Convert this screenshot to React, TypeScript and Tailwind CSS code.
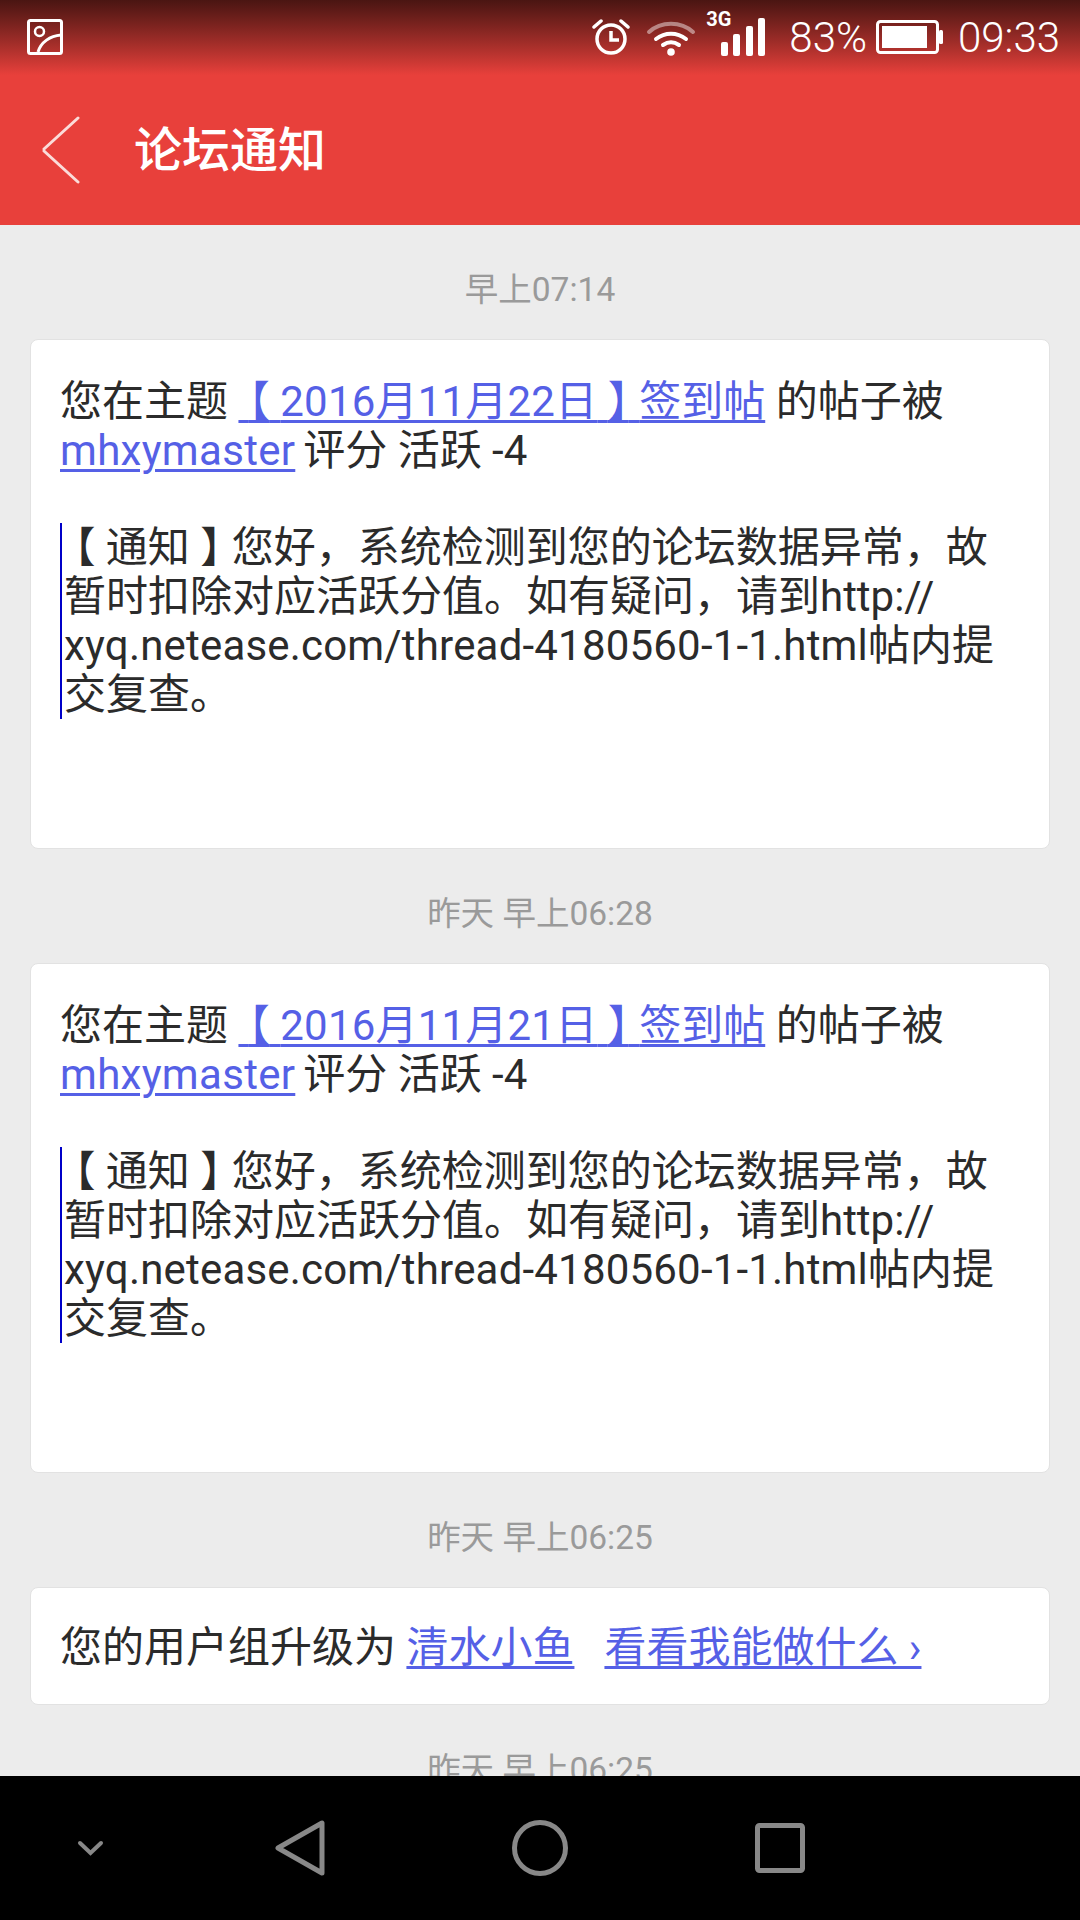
const fontStack = "font-['Roboto','Noto_Sans_CJK_SC',sans-serif]";

function Timestamp({ children }: { children: string }) {
  return (
    <div className="flex h-[114px] shrink-0 items-center justify-center pt-[15px] text-[33.5px] leading-[40px] text-[#9a9a9a]">
      {children}
    </div>
  );
}

function A({ children }: { children: React.ReactNode }) {
  return <span className="text-[#5560e6] underline decoration-[3px] underline-offset-[4px]">{children}</span>;
}

// the brackets sit centred in a full em in the reference, half-width glyph plus a space each side
function Bracket({ children }: { children: string }) {
  return (
    <>
      {'\u00a0'}
      <span className="[font-feature-settings:'halt']">{children}</span>
      {'\u00a0'}
    </>
  );
}

function NoticeCard({ date }: { date: string }) {
  return (
    <div className="mx-[30px] h-[510px] shrink-0 rounded-[8px] border border-[#e2e2e2] bg-white pt-[37px] pl-[29px] text-[42px] leading-[49px] whitespace-nowrap text-[#2b2b2b]">
      <div>
        您在主题{' '}
        <A>
          <Bracket>【</Bracket>
          <span className="tracking-[0.2px]">{date}</span>
          <Bracket>】</Bracket>签到帖
        </A>{' '}
        的帖子被
        <br />
        <span className="tracking-[0.3px]">
          <A>mhxymaster</A>
        </span>
        <span className="ml-[8px]">评分 活跃 -4</span>
      </div>
      <div className="mt-[48px] border-l-2 border-[#0000c8] pl-[2px]">
        <Bracket>【</Bracket>通知<Bracket>】</Bracket>您好，系统检测到您的论坛数据异常，故
        <br />
        暂时扣除对应活跃分值。如有疑问，请到http://
        <br />
        <span className="tracking-[0.19px]">xyq.netease.com/thread-4180560-1-1.html</span>帖内提
        <br />
        交复查。
      </div>
    </div>
  );
}

function StatusIcons() {
  return (
    <div className="flex items-center text-[42px] leading-none font-light text-white">
      {/* alarm */}
      <svg width="38" height="38" viewBox="0 0 38 38" fill="none" stroke="white">
        <circle cx="19" cy="21" r="14" strokeWidth="3.5" />
        <path d="M19 13v9h8" strokeWidth="3.5" />
        <path d="M2 9 9 3M36 9 29 3" strokeWidth="3.5" strokeLinecap="round" />
      </svg>
      {/* wifi */}
      <svg width="50" height="38" viewBox="0 0 50 38" fill="none" className="ml-[16px]">
        <path d="M3 14C15 3 35 3 47 14" stroke="#ffffff" strokeOpacity="0.45" strokeWidth="4" strokeLinecap="round" />
        <path d="M10 21c9-7 21-7 30 0" stroke="white" strokeWidth="4" strokeLinecap="round" />
        <path d="M17 27c5-3.500 11-3.500 16 0" stroke="white" strokeWidth="4" strokeLinecap="round" />
        <circle cx="25" cy="34" r="3.800" fill="white" />
      </svg>
      {/* 3G + signal bars */}
      <div className="relative ml-[25px] h-[38px] w-[44px]">
        <span className="absolute top-[-10px] left-[-15px] font-['Roboto',sans-serif] text-[20px] leading-[22px] font-bold">3G</span>
        <svg width="44" height="38" viewBox="0 0 44 38" fill="white">
          <rect x="0" y="24" width="7" height="14" rx="2" />
          <rect x="12" y="16" width="7" height="22" rx="2" />
          <rect x="25" y="8" width="7" height="30" rx="2" />
          <rect x="37" y="0" width="7" height="38" rx="2" />
        </svg>
      </div>
      <span className="mt-[2px] ml-[24px]">83%</span>
      {/* battery */}
      <svg width="67" height="34" viewBox="0 0 67 34" fill="none" className="ml-[9px]">
        <rect x="1.500" y="1.500" width="60" height="31" rx="3" stroke="white" strokeWidth="3" />
        <rect x="6" y="6" width="45" height="22" fill="white" />
        <rect x="63" y="10" width="4" height="14" rx="1.500" fill="white" />
      </svg>
      <span className="mt-[2px] ml-[15px]">09:33</span>
    </div>
  );
}

export default function App() {
  return (
    <div className={`flex h-[1920px] w-[1080px] flex-col overflow-hidden bg-[#ececec] ${fontStack}`}>
      <header className="flex h-[225px] shrink-0 flex-col bg-[#e8403b]">
        <div className="flex h-[75px] shrink-0 items-center justify-between bg-gradient-to-b from-[#4a1512] to-[#e8403b] pr-[20px] pb-[1px] pl-[27px]">
          <svg width="36" height="36" viewBox="0 0 36 36" fill="none" stroke="white" strokeWidth="3">
            <rect x="1.500" y="1.500" width="33" height="33" rx="2" />
            <circle cx="12.500" cy="12.500" r="4.500" strokeWidth="2.500" />
            <path d="M11 33C14 23 23 17 34 16" />
          </svg>
          <StatusIcons />
        </div>
        <div className="flex flex-1 items-center">
          <svg width="40" height="68" viewBox="0 0 40 68" fill="none" stroke="#fbdcd9" strokeWidth="3" strokeLinecap="round" className="ml-[41px]">
            <path d="M37 2 3 33M3 35l34 31" />
          </svg>
          <h1 className="mt-[2px] ml-[53px] text-[48px] leading-[56px] font-medium text-white">论坛通知</h1>
        </div>
      </header>

      <main className="flex min-h-0 flex-1 flex-col overflow-hidden">
        <Timestamp>早上07:14</Timestamp>
        <NoticeCard date="2016月11月22日" />
        <Timestamp>昨天 早上06:28</Timestamp>
        <NoticeCard date="2016月11月21日" />
        <Timestamp>昨天 早上06:25</Timestamp>
        <div className="mx-[30px] flex h-[118px] shrink-0 items-center rounded-[8px] border border-[#e2e2e2] bg-white pt-[3px] pl-[29px] text-[42px] leading-[49px] whitespace-nowrap text-[#2b2b2b]">
          <span>
            您的用户组升级为 <A>清水小鱼</A>
            <span className="ml-[30px]">
              <A>看看我能做什么 ›</A>
            </span>
          </span>
        </div>
        <Timestamp>昨天 早上06:25</Timestamp>
      </main>

      <nav className="flex h-[144px] shrink-0 items-center bg-black">
        <svg width="27" height="16" viewBox="0 0 27 16" fill="none" stroke="#888888" strokeWidth="4" strokeLinecap="round" className="ml-[77px]">
          <path d="M3 3l10.500 10L24 3" />
        </svg>
        <svg width="50" height="56" viewBox="0 0 50 56" fill="none" stroke="#888888" strokeWidth="5" strokeLinejoin="round" className="ml-[171px]">
          <path d="M47 3v50L3 28Z" />
        </svg>
        <svg width="56" height="56" viewBox="0 0 56 56" fill="none" stroke="#888888" strokeWidth="5" className="ml-[187px]">
          <circle cx="28" cy="28" r="25.500" />
        </svg>
        <svg width="50" height="50" viewBox="0 0 50 50" fill="none" stroke="#888888" strokeWidth="5" className="ml-[187px]">
          <rect x="2.500" y="2.500" width="45" height="45" rx="2" />
        </svg>
      </nav>
    </div>
  );
}
